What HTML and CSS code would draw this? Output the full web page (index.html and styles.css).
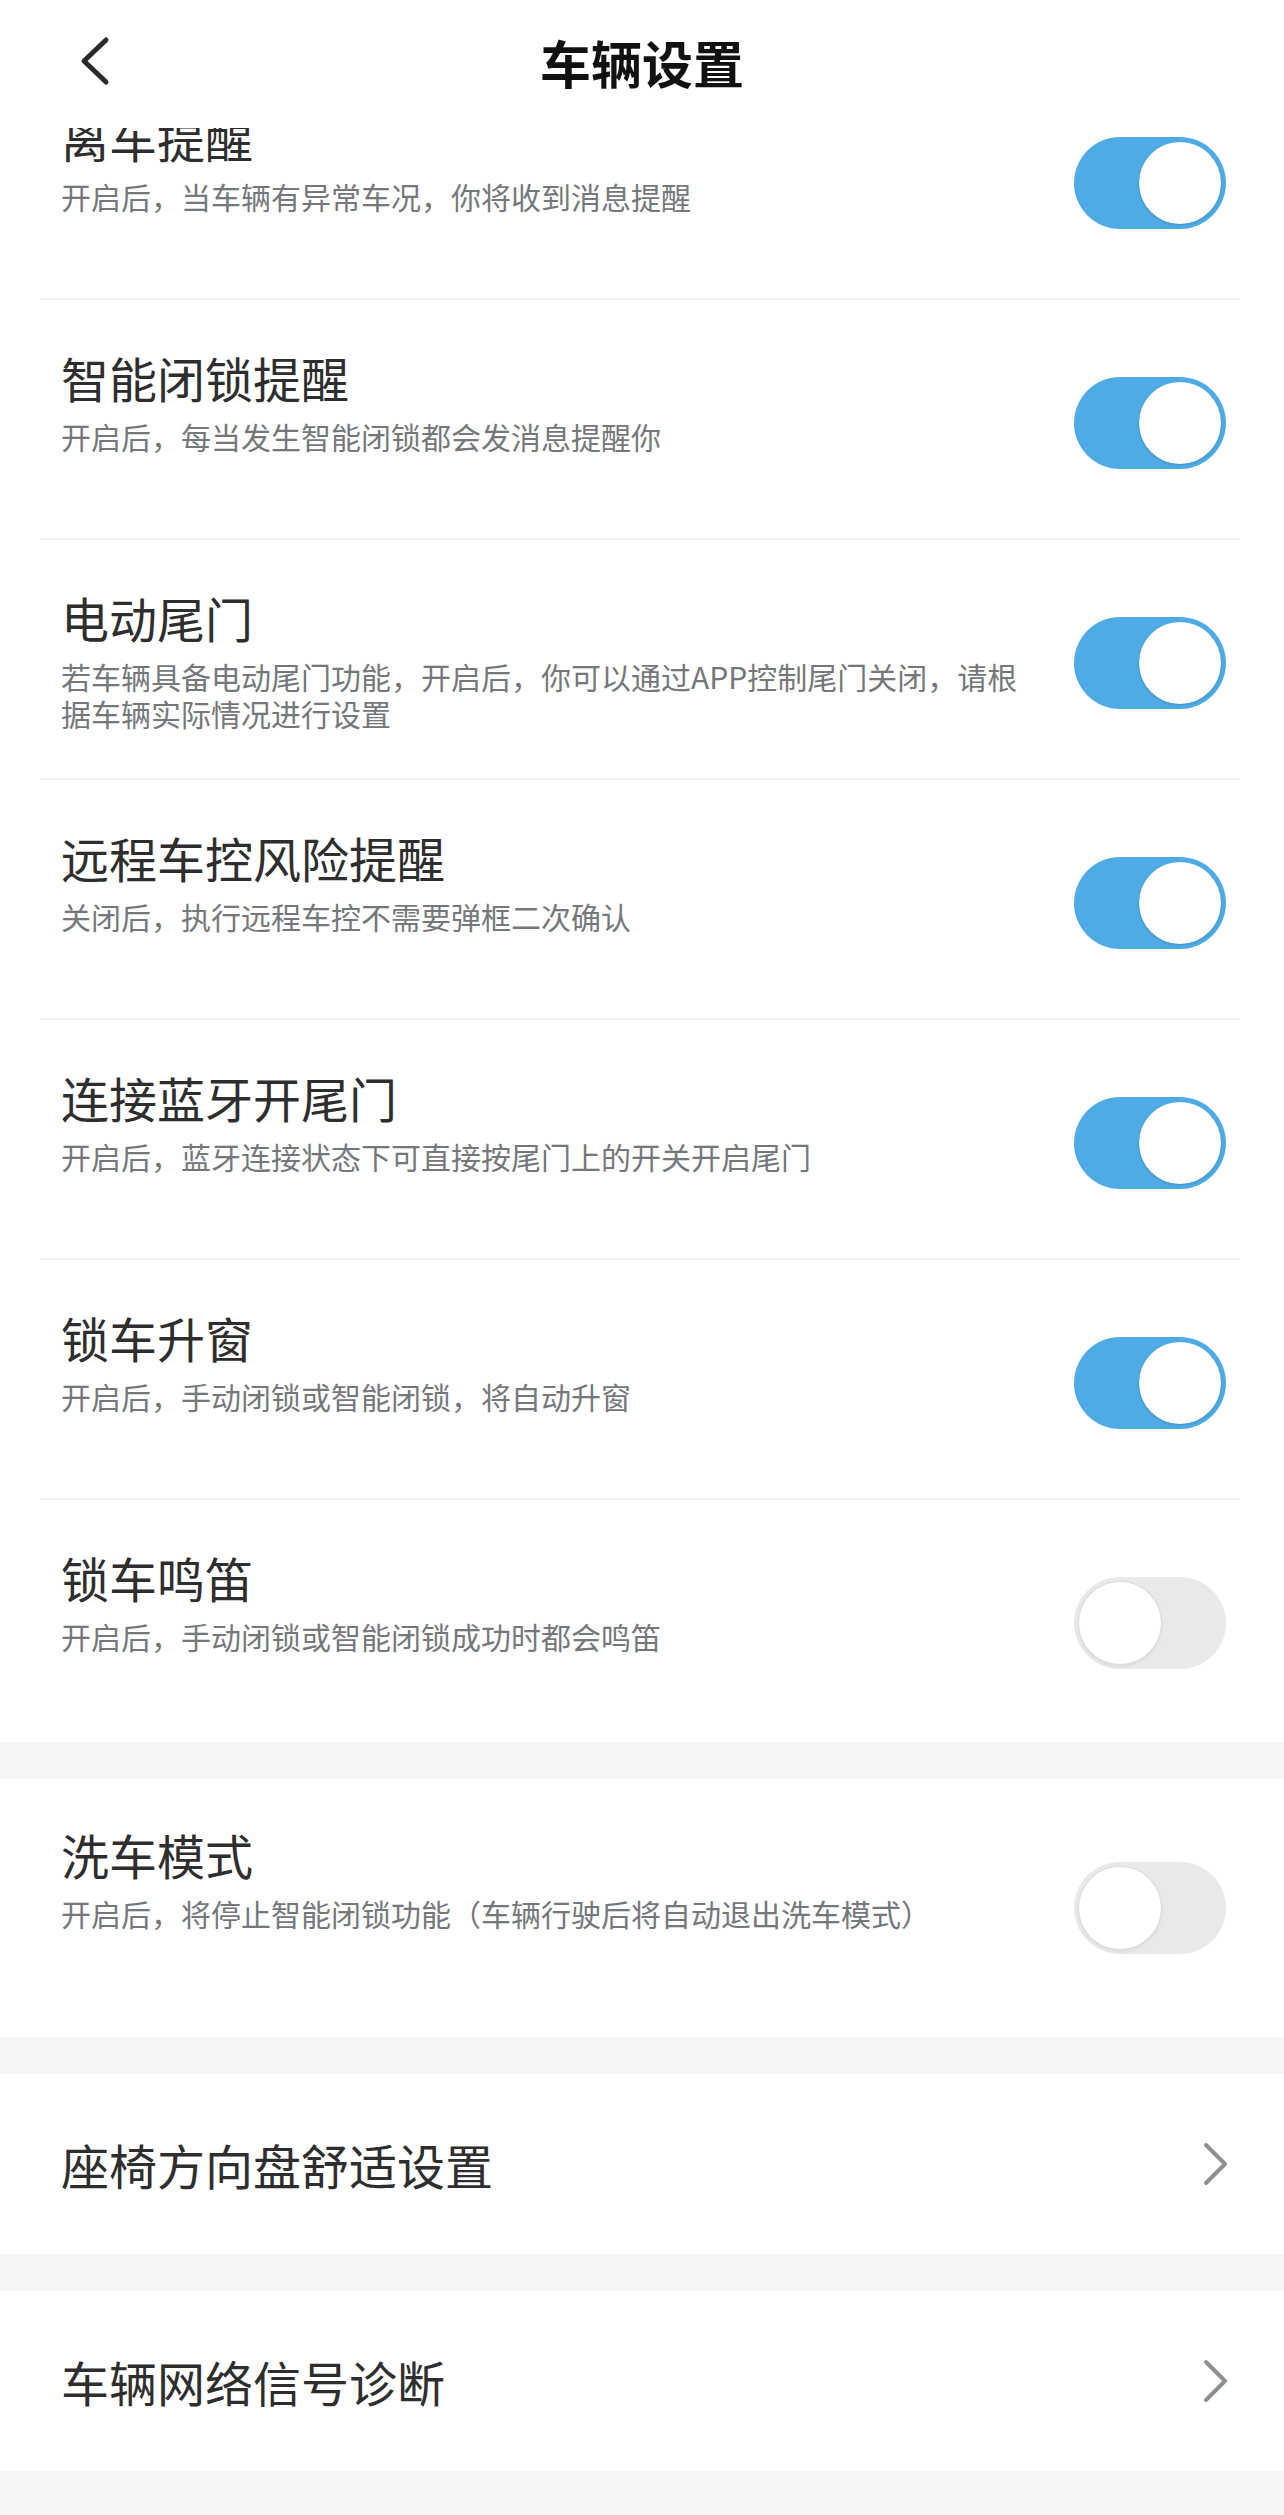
FILE: index.html
```html
<!DOCTYPE html>
<html lang="zh-CN">
<head>
    <meta charset="utf-8" />
    <title>车辆设置</title>
    <link rel="stylesheet" href="styles.css">
</head>
<body>
    <header class="barra">
        <a href="#" class="volver">
            <svg width="34" height="52" viewBox="0 0 34 52"><path d="M28 4 L6 25 L28 46" fill="none" stroke="#2a2a2a" stroke-width="5" stroke-linecap="round" stroke-linejoin="round"/></svg>
        </a>
        <h1 class="titulo">车辆设置</h1>
        <span></span>
    </header>

    <main class="lista">
        <section class="grupo grupo-primero">
            <div class="fila">
                <div class="texto">
                    <h2>离车提醒</h2>
                    <p>开启后，当车辆有异常车况，你将收到消息提醒</p>
                </div>
                <span class="interruptor activo"><span class="bola"></span></span>
            </div>
            <div class="fila">
                <div class="texto">
                    <h2>智能闭锁提醒</h2>
                    <p>开启后，每当发生智能闭锁都会发消息提醒你</p>
                </div>
                <span class="interruptor activo"><span class="bola"></span></span>
            </div>
            <div class="fila">
                <div class="texto">
                    <h2>电动尾门</h2>
                    <p>若车辆具备电动尾门功能，开启后，你可以通过APP控制尾门关闭，请根据车辆实际情况进行设置</p>
                </div>
                <span class="interruptor activo"><span class="bola"></span></span>
            </div>
            <div class="fila">
                <div class="texto">
                    <h2>远程车控风险提醒</h2>
                    <p>关闭后，执行远程车控不需要弹框二次确认</p>
                </div>
                <span class="interruptor activo"><span class="bola"></span></span>
            </div>
            <div class="fila">
                <div class="texto">
                    <h2>连接蓝牙开尾门</h2>
                    <p>开启后，蓝牙连接状态下可直接按尾门上的开关开启尾门</p>
                </div>
                <span class="interruptor activo"><span class="bola"></span></span>
            </div>
            <div class="fila">
                <div class="texto">
                    <h2>锁车升窗</h2>
                    <p>开启后，手动闭锁或智能闭锁，将自动升窗</p>
                </div>
                <span class="interruptor activo"><span class="bola"></span></span>
            </div>
            <div class="fila">
                <div class="texto">
                    <h2>锁车鸣笛</h2>
                    <p>开启后，手动闭锁或智能闭锁成功时都会鸣笛</p>
                </div>
                <span class="interruptor"><span class="bola"></span></span>
            </div>
        </section>

        <section class="grupo">
            <div class="fila fila-lavado">
                <div class="texto">
                    <h2>洗车模式</h2>
                    <p>开启后，将停止智能闭锁功能（车辆行驶后将自动退出洗车模式）</p>
                </div>
                <span class="interruptor"><span class="bola"></span></span>
            </div>
        </section>

        <section class="grupo">
            <a href="#" class="enlace">
                <span>座椅方向盘舒适设置</span>
                <svg width="30" height="46" viewBox="0 0 30 46"><path d="M6 4 L25 23 L6 42" fill="none" stroke="#8d9194" stroke-width="4" stroke-linecap="round" stroke-linejoin="round"/></svg>
            </a>
        </section>

        <section class="grupo">
            <a href="#" class="enlace">
                <span>车辆网络信号诊断</span>
                <svg width="30" height="46" viewBox="0 0 30 46"><path d="M6 4 L25 23 L6 42" fill="none" stroke="#8d9194" stroke-width="4" stroke-linecap="round" stroke-linejoin="round"/></svg>
            </a>
        </section>
    </main>
</body>
</html>
```

FILE: styles.css
```css
*{
    padding:0px;
    margin:0px;
    box-sizing:border-box;
}
body{
    background:#f5f6f7;
    font-family:"Noto Sans CJK SC","Noto Sans",sans-serif;
    color:#2e2e2e;
}
a{
    color:inherit;
    text-decoration:none;
}

/* barra superior fija, tapa el principio de la lista */
.barra{
    position:fixed;
    top:0;
    left:0;
    right:0;
    height:128px;
    z-index:10;
    background:#fff;
    display:grid;
    grid-template-columns:1fr auto 1fr;
    align-items:center;
    padding-bottom:5px;
}
.volver{
    display:flex;
    justify-self:start;
    margin-left:78px;
}
.titulo{
    font-size:51px;
    font-weight:bold;
    color:#111;
    line-height:60px;
}

.lista{
    padding-top:60px;
    padding-bottom:44px;
}
.grupo{
    background:#fff;
    padding:0 44px 0 40px;
}
.grupo + .grupo{
    margin-top:37px;
}
.grupo-primero{
    padding-bottom:2px;
}

.fila{
    display:flex;
    align-items:flex-start;
    height:240px;
    padding:47px 14px 0 21px;
    border-bottom:2px solid #f3f3f3;
}
.fila:last-child{
    border-bottom:none;
}
.texto{
    flex:1;
    margin-right:38px;
}
.texto h2{
    font-size:48px;
    font-weight:normal;
    line-height:60px;
    color:#2e2e2e;
}
.texto p{
    margin-top:11px;
    font-size:30px;
    line-height:37px;
    color:#74787b;
}

.fila-lavado{
    height:258px;
    padding-top:45px;
}
.fila-lavado .interruptor{
    margin-top:38px;
}

/* interruptor tipo iOS */
.interruptor{
    flex:none;
    display:flex;
    justify-content:flex-start;
    width:152px;
    height:92px;
    margin-top:30px;
    padding:5px;
    border-radius:46px;
    background:#e8e9ea;
}
.interruptor.activo{
    justify-content:flex-end;
    background:#4eabe6;
}
.bola{
    width:82px;
    height:82px;
    border-radius:50%;
    background:#fff;
    box-shadow:0 1px 3px rgba(0,0,0,0.18);
}
.interruptor:not(.activo) .bola{
    box-shadow:0 0 0 1px #dcdcdc, 0 2px 4px rgba(0,0,0,0.08);
}

.enlace{
    display:flex;
    align-items:center;
    justify-content:space-between;
    height:180px;
    padding:0 10px 0 21px;
    font-size:48px;
    line-height:60px;
    color:#2e2e2e;
}
.enlace svg{
    display:block;
}
```
